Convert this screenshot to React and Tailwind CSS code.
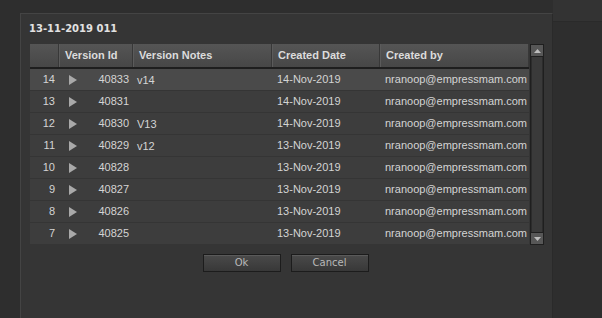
import React from 'react';

const rows = [
  { n: 14, id: 40833, note: 'v14', date: '14-Nov-2019' },
  { n: 13, id: 40831, note: '', date: '14-Nov-2019' },
  { n: 12, id: 40830, note: 'V13', date: '14-Nov-2019' },
  { n: 11, id: 40829, note: 'v12', date: '13-Nov-2019' },
  { n: 10, id: 40828, note: '', date: '13-Nov-2019' },
  { n: 9, id: 40827, note: '', date: '13-Nov-2019' },
  { n: 8, id: 40826, note: '', date: '13-Nov-2019' },
  { n: 7, id: 40825, note: '', date: '13-Nov-2019' },
];

const cols = 'grid grid-cols-[29px_74px_139px_108px_149px]';

function Play() {
  return (
    <svg width="8" height="10" viewBox="0 0 8 10" className="block">
      <path d="M0 0 L8 5 L0 10 Z" fill="#a9a9a9" />
    </svg>
  );
}

function Arrow({ down }) {
  return (
    <svg width="7" height="4" viewBox="0 0 7 4" className="block">
      <path d={down ? 'M0 0 L7 0 L3.5 4 Z' : 'M0 4 L7 4 L3.5 0 Z'} fill="#bdbdbd" />
    </svg>
  );
}

function HeaderCell({ children, first }) {
  return (
    <div
      className={
        'h-full flex items-center pl-[5px] border-r border-r-[#383838] ' +
        (first ? '' : 'border-l border-l-[#5b5b5b]')
      }
    >
      {children}
    </div>
  );
}

function Button({ children }) {
  return (
    <button className="w-[78px] h-[18px] border border-[#1c1c1c] bg-gradient-to-b from-[#4a4a4a] to-[#383838] text-[#b9b9b9] text-[10px] font-['DejaVu_Sans',sans-serif] leading-none shadow-[inset_0_1px_0_#5a5a5a]">
      {children}
    </button>
  );
}

export default function App() {
  return (
    <div className="w-[602px] h-[318px] bg-[#2e2e2e] flex overflow-hidden font-['Liberation_Sans',Arial,sans-serif]">
      <div className="w-[20px] shrink-0" />
      <div className="w-[533px] shrink-0 mt-[13px] bg-[#353535] border-l border-t border-[#444444] border-r border-r-[#2a2a2a]">
        <div className="pl-[8px] pt-[8px] h-[30px] text-[10px] font-bold text-[#e2e2e2] font-['DejaVu_Sans',sans-serif] leading-[14px]">
          13-11-2019 011
        </div>
        <div className="ml-[9px] flex gap-[1px]">
          <div className="w-[499px]">
            <div className={cols + ' h-[23px] bg-gradient-to-b from-[#555555] to-[#474747] text-[11px] font-bold text-[#dcdcdc] border-b-2 border-b-[#1e1e1e] box-content'}>
              <HeaderCell first />
              <HeaderCell>Version Id</HeaderCell>
              <HeaderCell>Version Notes</HeaderCell>
              <HeaderCell>Created Date</HeaderCell>
              <HeaderCell>Created by</HeaderCell>
            </div>
            {rows.map((r, i) => (
              <div
                key={r.n}
                className={
                  cols +
                  ' h-[22px] items-center text-[11px] text-[#d4d4d4] border-b border-b-[#353535] ' +
                  (i === 0 ? 'bg-[#4a4a4a]' : 'bg-[#3d3d3d]')
                }
              >
                <div className="text-right pr-[4px]">{r.n}</div>
                <div className="flex items-center pl-[10px]">
                  <Play />
                  <span className="ml-auto pr-[4px]">{r.id}</span>
                </div>
                <div className="pl-[4px] pt-[2px]">{r.note}</div>
                <div className="pl-[5px]">{r.date}</div>
                <div className="pl-[5px]">nranoop@empressmam.com</div>
              </div>
            ))}
          </div>
          <div className="w-[14px] h-[201px] flex flex-col border border-[#1f1f1f] bg-[#3a3a3a]">
            <div className="h-[12px] flex items-center justify-center bg-[#575757] border-b border-[#1f1f1f]">
              <Arrow />
            </div>
            <div className="flex-1 border-x border-[#2c2c2c]" />
            <div className="h-[12px] flex items-center justify-center bg-[#575757] border-t border-[#1f1f1f]">
              <Arrow down />
            </div>
          </div>
        </div>
        <div className="flex justify-center gap-[10px] mt-[9px] pr-[2px]">
          <Button>Ok</Button>
          <Button>Cancel</Button>
        </div>
      </div>
      <div className="flex-1 flex flex-col">
        <div className="h-[22px] bg-[#333333] border-b border-[#2a2a2a]" />
      </div>
    </div>
  );
}
